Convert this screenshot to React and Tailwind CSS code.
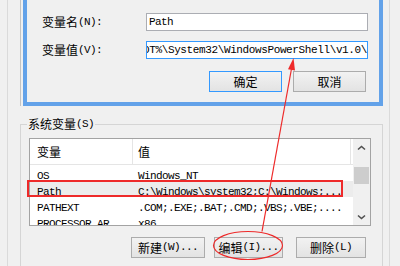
const mono = "font-['Liberation_Mono',monospace] text-[11px] tracking-[-0.6px] leading-none whitespace-nowrap";
const monoWide = "font-['Liberation_Mono',monospace] text-[11px] tracking-[-0.38px] leading-none whitespace-nowrap";
const cjk = "font-['Noto_Sans_CJK_SC',sans-serif] text-[12px] leading-none whitespace-nowrap";

function Label({ zh, en }) {
  return (
    <div className="w-[104px] shrink-0 flex items-center h-full">
      <span className={cjk}>{zh}</span>
      <span className={mono}>{en}</span>
    </div>
  );
}

function Btn({ children, def, className }) {
  return (
    <div
      className={
        "h-[21px] shrink-0 flex items-center justify-center border bg-gradient-to-b from-[#f2f2f2] to-[#e3e3e3] " +
        (def ? "border-[#3399ff] " : "border-[#acacac] ") +
        className
      }
    >
      {children}
    </div>
  );
}

function Dialog() {
  return (
    <div className="w-[360px] shrink-0 h-[106px] border-x-4 border-b-4 border-[#63a2e9] bg-[#f0f0f0] flex flex-col pt-[13px] pl-[15px]">
      <div className="flex h-[18px] items-center">
        <Label zh="变量名" en="(N):" />
        <div className="w-[222px] h-[18px] shrink-0 border border-[#abadb3] bg-white flex items-center pl-[2px]">
          <span className={mono}>Path</span>
        </div>
      </div>
      <div className="flex h-[18px] items-center mt-[10px]">
        <Label zh="变量值" en="(V):" />
        <div className="w-[222px] h-[18px] shrink-0 border border-[#3399ff] bg-white flex items-center justify-end overflow-hidden">
          <span className={monoWide}>%SYSTEMROOT%\System32\WindowsPowerShell\v1.0\</span>
        </div>
      </div>
      <div className="flex mt-[12px] pl-[167px] gap-[11px]">
        <Btn def className="w-[73px]">
          <span className={cjk}>确定</span>
        </Btn>
        <Btn className="w-[73px]">
          <span className={cjk}>取消</span>
        </Btn>
      </div>
    </div>
  );
}

function Row({ name, value, sel }) {
  return (
    <div className={"flex h-[16px] shrink-0 items-center " + (sel ? "bg-[#ececec]" : "")}>
      <div className="w-[103px] shrink-0 pl-[7px]">
        <span className={mono}>{name}</span>
      </div>
      <div className="flex-1 pl-[5px] overflow-hidden">
        <span className={mono}>{value}</span>
      </div>
    </div>
  );
}

function Chevron({ down }) {
  return (
    <svg width="9" height="6" viewBox="0 0 9 6">
      <path
        d={down ? "M1 1.5 L4.5 4.5 L8 1.5" : "M1 4.5 L4.5 1.5 L8 4.5"}
        fill="none"
        stroke="#505050"
        strokeWidth="1.6"
      />
    </svg>
  );
}

function ListBox() {
  return (
    <div className="mt-[7px] ml-[8px] w-[342px] h-[88px] shrink-0 border border-[#a3a3a3] bg-white flex overflow-hidden">
      <div className="flex-1 flex flex-col min-w-0">
        <div className="flex h-[26px] shrink-0 border-b border-[#e5e5e5]">
          <div className="w-[103px] shrink-0 border-r border-[#e5e5e5] pl-[7px] flex items-center">
            <span className={cjk}>变量</span>
          </div>
          <div className="w-[218px] shrink-0 border-r border-[#e5e5e5] pl-[5px] flex items-center">
            <span className={cjk}>值</span>
          </div>
        </div>
        <Row name="OS" value="Windows_NT" />
        <Row name="Path" value="C:\Windows\system32;C:\Windows;..." sel />
        <Row name="PATHEXT" value=".COM;.EXE;.BAT;.CMD;.VBS;.VBE;...." />
        <Row name="PROCESSOR_AR" value="x86" />
      </div>
      <div className="w-[17px] shrink-0 bg-[#f0f0f0] flex flex-col">
        <div className="h-[17px] shrink-0 flex items-center justify-center">
          <Chevron />
        </div>
        <div className="mt-[11px] mx-[1px] h-[17px] shrink-0 bg-[#cdcdcd]" />
        <div className="flex-1" />
        <div className="h-[17px] shrink-0 flex items-center justify-center">
          <Chevron down />
        </div>
      </div>
    </div>
  );
}

function GroupBox() {
  return (
    <div className="w-[363px] shrink-0 mt-[18px] border-x border-t border-[#d5d5d5] flex flex-col">
      <div className="-mt-[8px] ml-[6px] px-px bg-[#f0f0f0] self-start h-[14px] flex items-center">
        <span className={cjk}>系统变量</span>
        <span className={mono}>(S)</span>
      </div>
      <ListBox />
      <div className="flex mt-[11px]">
        <Btn className="ml-[110px] w-[74px]">
          <span className={cjk}>新建</span>
          <span className={mono}>(W)...</span>
        </Btn>
        <Btn className="ml-[9px] w-[69px]">
          <span className={cjk}>编辑</span>
          <span className={mono}>(I)...</span>
        </Btn>
        <Btn className="ml-[13px] w-[70px]">
          <span className={cjk}>删除</span>
          <span className={mono}>(L)</span>
        </Btn>
      </div>
    </div>
  );
}

function Overlay() {
  return (
    <svg className="absolute left-0 top-0 pointer-events-none" width="400" height="266" viewBox="0 0 400 266">
      <rect x="28" y="181" width="314" height="15" fill="none" stroke="#ee2a2a" strokeWidth="2" />
      <ellipse cx="248" cy="245.5" rx="34.5" ry="14" fill="none" stroke="#ee2a2a" strokeWidth="1.2" />
      <line x1="262" y1="231.5" x2="291.8" y2="67" stroke="#ee2a2a" strokeWidth="1.2" />
      <polygon points="293.5,58 295,70.4 288,69.2" fill="#ee2a2a" />
    </svg>
  );
}

export default function App() {
  return (
    <div className="relative flex w-[400px] h-[266px] overflow-hidden bg-[#f0f0f0] text-black">
      <div className="w-[7px] shrink-0" />
      <div className="w-px shrink-0 bg-[#dadada]" />
      <div className="flex flex-col flex-1 min-w-0">
        <div className="flex h-[106px] shrink-0">
          <div className="w-[12px] shrink-0" />
          <div className="w-px shrink-0 bg-[#c4c4c4]" />
          <div className="w-[2px] shrink-0" />
          <Dialog />
          <div className="w-[6px] shrink-0" />
          <div className="w-px shrink-0 bg-[#dadada]" />
        </div>
        <div className="flex flex-1">
          <div className="w-[12px] shrink-0" />
          <GroupBox />
          <div className="w-[6px] shrink-0" />
          <div className="w-px shrink-0 bg-[#dadada]" />
        </div>
      </div>
      <Overlay />
    </div>
  );
}
